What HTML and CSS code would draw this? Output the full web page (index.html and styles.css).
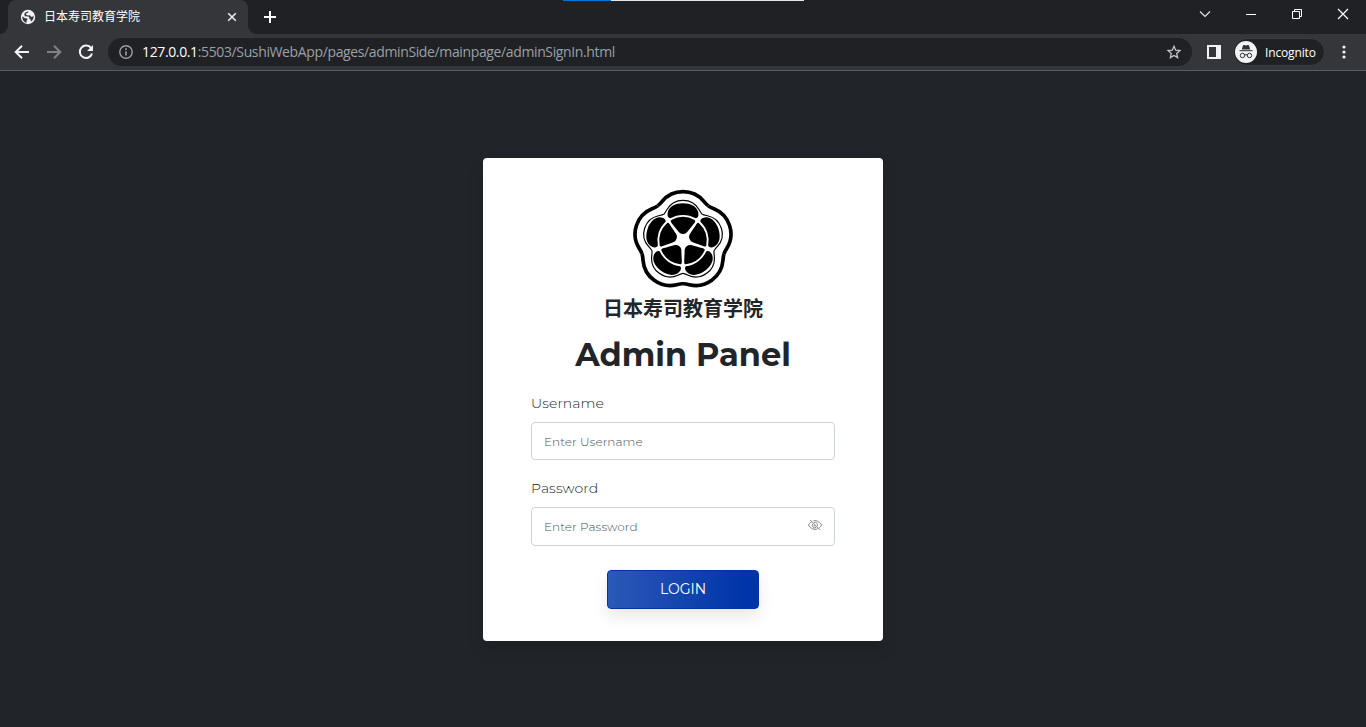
FILE: index.html
```html
<!DOCTYPE html>
<html lang="en">
<head>
<meta charset="utf-8">
<title>日本寿司教育学院</title>
<link rel="stylesheet" href="styles.css">
</head>
<body>
<header class="browser">
  <div class="tabstrip">
    <div class="tab">
      <svg class="globe" viewBox="0 0 16 16" width="16" height="16"><circle cx="8" cy="8" r="7.2" fill="#f1f3f4"/><path d="M2.3 7.2 5 9.2l2.2.2.3 1.2-1 1.1v2.2C3.6 13.2 2 10.5 2.300 7.200zM8.300 2.200l-.2 1.500-1.900.6-.1 1.500 1.600.6 2.300-.1 1 1.400 1.500.1 1-1.300c.6 2.400-.6 4.800-2.600 6.100l-.3-2.200-1.500-.8.3-1.600-2.400-.8-1.500.2-1.300-1.300.7-2.400z" fill="#35363a"/></svg>
      <span class="tab-title">日本寿司教育学院</span>
      <svg class="tab-close" viewBox="0 0 10 10" width="10" height="10"><path d="M1.200 1.200l7.600 7.600M8.800 1.200 1.200 8.800" stroke="#e8eaed" stroke-width="1.600"/></svg>
    </div>
    <svg class="new-tab" viewBox="0 0 12 12" width="12" height="12"><path d="M6 0v12M0 6h12" stroke="#fff" stroke-width="2"/></svg>
    <div class="window-controls">
      <svg viewBox="0 0 12 12" width="12" height="12"><path d="M1 3.500l5 5 5-5" fill="none" stroke="#e8eaed" stroke-width="1.100"/></svg>
      <svg viewBox="0 0 12 12" width="12" height="12"><path d="M1 6.500h10" stroke="#fff"/></svg>
      <svg viewBox="0 0 12 12" width="12" height="12"><path d="M1.500 3.500h7v7h-7zM3.500 3.500v-2h7v7h-2" fill="none" stroke="#fff"/></svg>
      <svg viewBox="0 0 12 12" width="12" height="12"><path d="M1 1l10 10M11 1 1 11" stroke="#fff" stroke-width="1.200"/></svg>
    </div>
    <div class="load-bar"></div>
  </div>
  <div class="toolbar">
    <svg class="nav" viewBox="0 0 16 16" width="16" height="16"><path d="M15 8H2M8 1.700 1.700 8 8 14.300" fill="none" stroke="#f1f3f4" stroke-width="2"/></svg>
    <svg class="nav" viewBox="0 0 16 16" width="16" height="16"><path d="M1 8h13M8 1.700 14.300 8 8 14.300" fill="none" stroke="#818286" stroke-width="2"/></svg>
    <svg class="nav" viewBox="0 0 16 16" width="16" height="16"><path d="M13.100 4.200A6.200 6.200 0 1 0 14 9.500" fill="none" stroke="#f1f3f4" stroke-width="2"/><path d="M15 1v6H9z" fill="#f1f3f4"/></svg>
    <div class="omnibox">
      <svg viewBox="0 0 16 16" width="16" height="16"><circle cx="8" cy="8" r="6.200" fill="none" stroke="#9aa0a6" stroke-width="1.400"/><path d="M8 7.200v4.200M8 4.300v1.600" stroke="#9aa0a6" stroke-width="1.600"/></svg>
      <span class="url"><b>127.0.0.1</b>:5503/SushiWebApp/pages/adminSide/mainpage/adminSignIn.html</span>
      <svg class="star" viewBox="0 0 16 16" width="16" height="16"><path d="M8 2.300l1.700 3.900 4.200.4-3.200 2.800.9 4.200L8 11.400l-3.600 2.200.9-4.200-3.200-2.800 4.200-.4z" fill="none" stroke="#c4c7c5" stroke-width="1.300"/></svg>
    </div>
    <svg class="side-panel" viewBox="0 0 14 14" width="14" height="14"><path fill="#f1f3f4" fill-rule="evenodd" d="M0 0h14v14H0zM2 2v10h7V2z"/></svg>
    <div class="profile">
      <svg viewBox="0 0 22 22" width="22" height="22"><circle cx="11" cy="11" r="11" fill="#f1f3f4"/><path d="M6.800 8.500 8 4.500q.3-.8 1.100-.5l1.900.5 1.900-.5q.8-.3 1.100.5l1.200 4z" fill="#303134"/><path d="M4.500 9.700h13M9 14.200q2-1.200 4 0" stroke="#303134" stroke-width="1" fill="none"/><circle cx="7.500" cy="14.500" r="2.200" fill="none" stroke="#303134"/><circle cx="14.500" cy="14.500" r="2.200" fill="none" stroke="#303134"/></svg>
      <span>Incognito</span>
    </div>
    <svg class="more" viewBox="0 0 4 14" width="4" height="14"><g fill="#f1f3f4"><circle cx="2" cy="2" r="1.600"/><circle cx="2" cy="7" r="1.600"/><circle cx="2" cy="12" r="1.600"/></g></svg>
  </div>
</header>
<main class="page">
  <form class="card">
    <svg class="logo" viewBox="-150 -155 300 300" width="100" height="100">
      <defs>
        <g id="lobe">
          <path d="M-76-104.700Q-70.800-108-62.500-118A82 82 0 0 1 62.500-118Q70.800-108 76-104.700" fill="none" stroke="#000" stroke-width="11"/>
          <path d="M-57.600-79.300Q-55.500-80.800-48.500-93A56 56 0 0 1 48.500-93Q55.500-80.800 57.600-79.300" fill="none" stroke="#000" stroke-width="3.500"/>
          <path d="M-38-67Q-48-69-46-84C-42-103-22-112 0-112C22-112 42-103 46-84Q48-69 38-67A77 77 0 0 0-38-67Z"/>
          <path d="M-35-62A71 71 0 0 1 35-62Q39-60 35-54C26-43 18-33 12-25Q8-20 0-20Q-8-20-12-25C-18-33-26-43-35-54Q-39-60-35-62Z"/>
        </g>
      </defs>
      <use href="#lobe"/><use href="#lobe" transform="rotate(72)"/><use href="#lobe" transform="rotate(144)"/><use href="#lobe" transform="rotate(216)"/><use href="#lobe" transform="rotate(288)"/>
    </svg>
    <h2 class="school">日本寿司教育学院</h2>
    <h1 class="title">Admin Panel</h1>
    <label class="label" for="user">Username</label>
    <div class="field"><input class="input" id="user" type="text" placeholder="Enter Username"></div>
    <label class="label" for="pass">Password</label>
    <div class="field field-pass">
      <input class="input" id="pass" type="password" placeholder="Enter Password">
      <svg viewBox="0 0 16 16" width="14" height="14" fill="none" stroke="#6c757d" stroke-width="1"><path d="M4.300 4.200C2.300 5.300.8 7.300.5 8c.6 1.200 3.300 5 7.500 5 1.200 0 2.300-.3 3.200-.8M6 3.300C6.600 3.100 7.300 3 8 3c4.200 0 6.900 3.800 7.500 5-.3.700-1.200 2-2.500 3.100M5.300 6.700a3 3 0 0 0 4.100 4.100M7 5.200a3 3 0 0 1 3.800 3.800M6.500 8l1.700 1.700M2.500 2.300l11.500 11.500"/></svg>
    </div>
    <button class="login" type="button">LOGIN</button>
  </form>
</main>
</body>
</html>
```
FILE: styles.css
```css
* { box-sizing: border-box; }
body {
  margin: 0;
  height: 727px;
  display: flex;
  flex-direction: column;
  overflow: hidden;
  background: #212529;
  font-family: Montserrat, Inter, "Noto Sans CJK SC", sans-serif;
}
svg { display: block; flex: none; }
.browser {
  height: 71px;
  border-bottom: 1px solid #5b5d60;
  background: #35363a;
  font-family: "Open Sans", "Noto Sans CJK SC", sans-serif;
}
.tabstrip {
  position: relative;
  height: 34px;
  display: flex;
  align-items: center;
  background: #202124;
}
.load-bar {
  position: absolute;
  top: 0;
  left: 563px;
  width: 241px;
  height: 1px;
  background: linear-gradient(90deg, #0078d7 48px, #e6e6e6 48px);
}
.tab {
  position: relative;
  width: 240px;
  height: 34px;
  margin-left: 8px;
  padding: 0 11px 0 12px;
  display: flex;
  align-items: center;
  border-radius: 8px 8px 0 0;
  background: #35363a;
}
.tab::before,
.tab::after {
  content: "";
  position: absolute;
  bottom: 0;
  width: 8px;
  height: 8px;
}
.tab::before { left: -8px; background: radial-gradient(circle at 0 0, #202124 7.5px, #35363a 8px); }
.tab::after { right: -8px; background: radial-gradient(circle at 100% 0, #202124 7.5px, #35363a 8px); }
.tab-title {
  flex: 1;
  margin-left: 8px;
  padding-bottom: 2px;
  font-family: "Noto Sans CJK SC", sans-serif;
  font-size: 12px;
  line-height: 18px;
  color: #fff;
}
.new-tab { margin-left: 16px; }
.window-controls {
  margin: -6px 17px 0 auto;
  display: flex;
  gap: 34px;
}
.toolbar {
  height: 36px;
  padding: 0 20px 0 14px;
  display: flex;
  align-items: center;
}
.nav { margin-right: 16px; }
.omnibox {
  width: 1084px;
  height: 28px;
  margin-left: -2px;
  padding: 0 10px;
  display: flex;
  align-items: center;
  border-radius: 14px;
  background: #202124;
}
.url {
  margin-left: 8px;
  font-size: 14px;
  line-height: 20px;
  letter-spacing: -.37px;
  color: #9aa0a6;
  white-space: nowrap;
}
.url b { font-weight: 400; color: #fff; }
.star { margin-left: auto; }
.side-panel { margin-left: 15px; }
.profile {
  width: 92px;
  height: 28px;
  margin-left: 12px;
  padding-left: 1px;
  display: flex;
  align-items: center;
  gap: 8px;
  border: 1px solid #3c3d41;
  border-radius: 14px;
  background: #202124;
  font-size: 12px;
  letter-spacing: -.15px;
  color: #fff;
}
.more { margin-left: auto; }
.page {
  flex: 1;
  display: flex;
  justify-content: center;
  align-items: flex-start;
  padding-top: 87px;
}
.card {
  width: 400px;
  height: 483px;
  padding: 31px 48px 32px;
  display: flex;
  flex-direction: column;
  border-radius: 4px;
  background: #fff;
  box-shadow: 0 8px 16px rgba(0, 0, 0, .15);
  color: #212529;
}
.logo { align-self: center; }
.school {
  margin: 7px 0 0;
  text-align: center;
  font-family: "Noto Sans CJK SC", sans-serif;
  font-size: 20px;
  font-weight: 700;
  line-height: 24px;
}
.title {
  margin: 16px 0 0;
  text-align: center;
  font-size: 32px;
  font-weight: 700;
  line-height: 38px;
  white-space: nowrap;
}
.label {
  height: 21px;
  margin-top: 19px;
  font-size: 14px;
  font-weight: 350;
  line-height: 21px;
  letter-spacing: .08px;
}
.field {
  position: relative;
  height: 38px;
  margin-top: 8px;
}
.field + .label { margin-top: 18px; }
.field-pass { height: 39px; }
.input {
  display: block;
  width: 100%;
  height: 100%;
  padding: 0 12px;
  border: 1px solid #ced4da;
  border-radius: 4px;
  background: #fff;
  font: 350 12px/18px Montserrat, Inter, sans-serif;
  letter-spacing: .07px;
}
.input::placeholder { color: #44505b; opacity: 1; }
.field-pass svg {
  position: absolute;
  top: 11px;
  right: 13px;
}
.login {
  align-self: center;
  width: 152px;
  height: 39px;
  margin-top: 24px;
  border: 1px solid #0035a9;
  border-radius: 4px;
  background: linear-gradient(90deg, #2b59b8, #0035a9 90%);
  box-shadow: 0 8px 16px rgba(0, 0, 0, .09);
  font: 400 14px/21px Montserrat, Inter, sans-serif;
  color: #fff;
}
```
